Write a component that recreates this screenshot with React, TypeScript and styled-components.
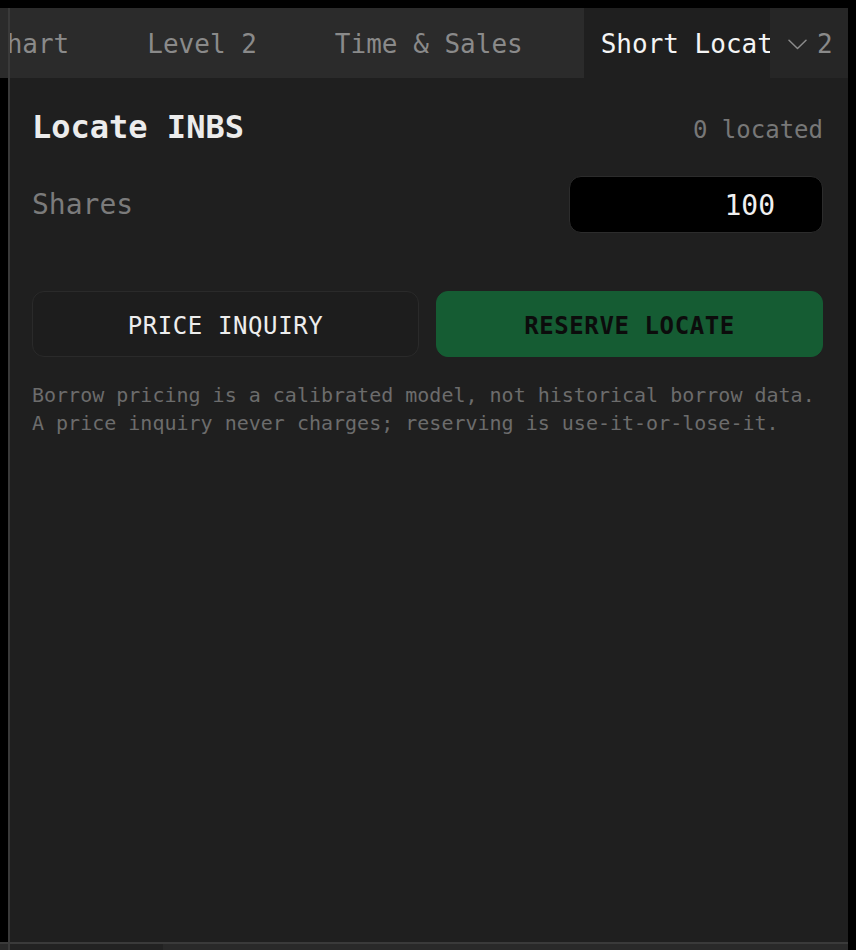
import React, { useState } from "react"
import styled, { createGlobalStyle } from "styled-components"

const MONO = `"DejaVu Sans Mono", "Liberation Mono", monospace`

const GlobalStyle = createGlobalStyle`
  html, body {
    margin: 0;
    padding: 0;
    background: #000;
  }
  body {
    font-family: ${MONO};
    overflow: hidden;
  }
  * {
    box-sizing: border-box;
  }
`

const TABS = ["Chart", "Level 2", "Time & Sales", "Short Locate"]

const ShortLocatePanel = ({ symbol }: { symbol: string }) => {
  const [shares, setShares] = useState("100")

  return (
    <Panel>
      <HeaderRow>
        <Title>Locate {symbol}</Title>
        <Count>0 located</Count>
      </HeaderRow>
      <FieldRow>
        <FieldLabel htmlFor="locate-shares">Shares</FieldLabel>
        <SharesInput
          id="locate-shares"
          inputMode="numeric"
          value={shares}
          onChange={e => setShares(e.target.value)}
        />
      </FieldRow>
      <Actions>
        <ActionButton>PRICE INQUIRY</ActionButton>
        <ActionButton $primary>RESERVE LOCATE</ActionButton>
      </Actions>
      <Note>
        Borrow pricing is a calibrated model, not historical borrow data. A
        price inquiry never charges; reserving is use-it-or-lose-it.
      </Note>
    </Panel>
  )
}

const App = () => {
  const [active, setActive] = useState("Short Locate")

  return (
    <>
      <GlobalStyle />
      <Screen>
        <Workspace>
          <TabBar>
            <NeighbourStub />
            <TabStrip>
              <TabTrack>
                {TABS.map(tab => (
                  <Tab
                    key={tab}
                    $active={tab === active}
                    onClick={() => setActive(tab)}
                  >
                    {tab}
                  </Tab>
                ))}
              </TabTrack>
              <OverflowButton aria-label="2 hidden tabs">
                <svg width="19" height="11" viewBox="0 0 19 11" fill="none">
                  <path
                    d="M1 1.3 L9.5 9.5 L18 1.3"
                    stroke="#8c8c8c"
                    strokeWidth="1.5"
                    strokeLinecap="round"
                    strokeLinejoin="round"
                  />
                </svg>
                <span>2</span>
              </OverflowButton>
            </TabStrip>
          </TabBar>
          <Body>
            <Gutter />
            <ShortLocatePanel symbol="INBS" />
          </Body>
          <BottomBar>
            <BottomTab />
          </BottomBar>
          <Splitter />
        </Workspace>
      </Screen>
    </>
  )
}

export default App

const Screen = styled.div`
  height: 950px;
  padding: 8px 8px 0 0;
  background: #000;
`

const Workspace = styled.div`
  position: relative;
  height: 100%;
  display: flex;
  flex-direction: column;
  overflow: hidden;
`

const Splitter = styled.div`
  position: absolute;
  left: 8px;
  top: 0;
  bottom: 0;
  width: 2px;
  background: #3a3a3a;
  z-index: 3;
`

const TabBar = styled.div`
  flex: none;
  display: flex;
  height: 70px;
  background: #2b2b2b;
`

const NeighbourStub = styled.div`
  flex: none;
  width: 10px;
`

const TabStrip = styled.div`
  position: relative;
  flex: 1;
  min-width: 0;
  overflow: hidden;
`

const TabTrack = styled.div`
  display: flex;
  height: 100%;
  margin-left: -36px;
`

const Tab = styled.button<{ $active?: boolean }>`
  flex: none;
  height: 100%;
  padding: 2px 61px 0 17px;
  border: 0;
  background: ${p => (p.$active ? "#1f1f1f" : "transparent")};
  color: ${p => (p.$active ? "#f4f4f4" : "#8a8a8a")};
  font: 26px/1 ${MONO};
  white-space: nowrap;
  cursor: pointer;
`

const OverflowButton = styled.button`
  position: absolute;
  top: 0;
  right: 0;
  height: 100%;
  width: 78px;
  display: flex;
  align-items: center;
  gap: 10px;
  padding: 2px 0 0 18px;
  border: 0;
  background: #262626;
  color: #8a8a8a;
  font: 26px/1 ${MONO};
  cursor: pointer;
`

const Body = styled.div`
  flex: none;
  height: 864px;
  display: flex;
`

const Gutter = styled.div`
  flex: none;
  width: 10px;
  background: #000;
`

const Panel = styled.section`
  flex: 1;
  min-width: 0;
  background: #1f1f1f;
  padding: 29px 25px 0 22px;
`

const HeaderRow = styled.div`
  display: flex;
  justify-content: space-between;
  align-items: baseline;
`

const Title = styled.h2`
  margin: 0;
  font: bold 32px/40px ${MONO};
  color: #ececec;
`

const Count = styled.span`
  font-size: 24px;
  color: #777;
`

const FieldRow = styled.div`
  margin-top: 29px;
  display: flex;
  justify-content: space-between;
  align-items: center;
`

const FieldLabel = styled.label`
  font-size: 28px;
  color: #7b7b7b;
`

const SharesInput = styled.input`
  width: 254px;
  height: 57px;
  padding: 2px 47px 0 12px;
  border: 1px solid #2c2c2c;
  border-radius: 12px;
  background: #000;
  color: #f0f0f0;
  font: 28px ${MONO};
  text-align: right;
  outline: none;
`

const Actions = styled.div`
  margin-top: 58px;
  display: grid;
  grid-template-columns: 1fr 1fr;
  gap: 17px;
`

const ActionButton = styled.button<{ $primary?: boolean }>`
  height: 66px;
  padding-top: 4px;
  border-radius: 12px;
  border: 1px solid ${p => (p.$primary ? "#155c33" : "#2a2a2a")};
  background: ${p => (p.$primary ? "#155c33" : "#1d1d1d")};
  color: ${p => (p.$primary ? "#0c0c0c" : "#ededed")};
  font: ${p => (p.$primary ? "bold" : "normal")} 24px ${MONO};
  letter-spacing: 0.6px;
  cursor: pointer;
`

const Note = styled.p`
  margin: 24px 0 0;
  font-size: 20px;
  line-height: 28px;
  color: #6c6c6c;
`

const BottomBar = styled.div`
  flex: none;
  display: flex;
  height: 40px;
  border-top: 2px solid #3a3a3a;
  background: #292929;
`

const BottomTab = styled.div`
  margin-left: 10px;
  width: 153px;
  background: #222;
`
